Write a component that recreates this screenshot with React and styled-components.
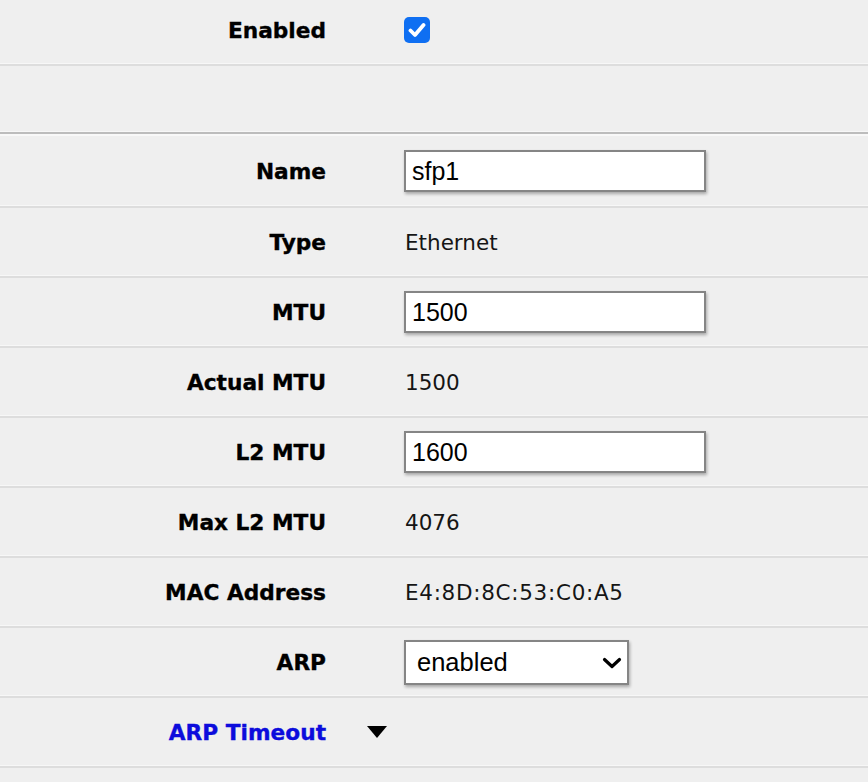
import React, { useState } from 'react';
import styled, { createGlobalStyle } from 'styled-components';

const GlobalStyle = createGlobalStyle`
  html, body {
    margin: 0;
    padding: 0;
    background: #efefef;
  }
  body {
    font-family: "DejaVu Sans", Verdana, sans-serif;
    color: #111;
  }
`;

const Form = styled.div`
  width: 868px;
  min-height: 782px;
  background: #efefef;
`;

const Row = styled.div`
  display: grid;
  grid-template-columns: 326px 78px 1fr;
  align-items: center;
  box-sizing: content-box;
  height: ${(p) => p.$h || 68}px;
  padding-bottom: ${(p) => p.$pb || 0}px;
  border-bottom: 2px solid ${(p) => (p.$strong ? '#bcbcbc' : '#dddddd')};
  box-shadow: inset 0 -3px 0 -2px #f7f7f7;
`;

const TopEdge = styled.div`
  height: 2px;
  background: #f8f8f8;
`;

const Label = styled.div`
  text-align: right;
  font-weight: bold;
  font-size: 21.7px;
  -webkit-text-stroke: 0.35px ${(p) => (p.$link ? '#0c0cdc' : '#000')};
  color: ${(p) => (p.$link ? '#0c0cdc' : '#000')};
  cursor: ${(p) => (p.$link ? 'pointer' : 'default')};
  white-space: nowrap;
`;

const Toggle = styled.div`
  padding-left: 41px;
  display: flex;
  align-items: center;
`;

const Value = styled.div`
  font-size: 21.5px;
  color: #151515;
  padding-left: 1px;
  letter-spacing: ${(p) => (p.$wide ? '0.7px' : '0')};
`;

const TextInput = styled.input`
  width: 302px;
  height: 42px;
  box-sizing: border-box;
  border: 2px solid #858585;
  border-radius: 0;
  background: #fff;
  padding: 0 6px;
  font-family: "Liberation Sans", Arial, sans-serif;
  font-size: 25px;
  color: #000;
  box-shadow: 1px 2px 3px rgba(0, 0, 0, 0.3);
  outline: none;
`;

const SelectWrap = styled.div`
  position: relative;
  width: 225px;
  height: 45px;
`;

const Select = styled.select`
  appearance: none;
  -webkit-appearance: none;
  width: 100%;
  height: 100%;
  box-sizing: border-box;
  border: 2px solid #858585;
  border-radius: 0;
  background: #fff;
  padding: 0 0 0 11px;
  font-family: "Liberation Sans", Arial, sans-serif;
  font-size: 25.5px;
  color: #000;
  box-shadow: 1px 2px 3px rgba(0, 0, 0, 0.3);
  outline: none;
`;

const Chevron = styled.svg`
  position: absolute;
  right: 7px;
  top: 17px;
  pointer-events: none;
`;

const CheckBox = styled.button`
  width: 26px;
  height: 26px;
  border: none;
  border-radius: 5px;
  background: ${(p) => (p.$on ? '#0f6ff2' : '#fff')};
  display: flex;
  align-items: center;
  justify-content: center;
  padding: 0;
  cursor: pointer;
`;

const rows = [
  { label: 'Type', value: 'Ethernet' },
  { label: 'MTU', input: '1500' },
  { label: 'Actual MTU', value: '1500' },
  { label: 'L2 MTU', input: '1600' },
  { label: 'Max L2 MTU', value: '4076' },
  { label: 'MAC Address', value: 'E4:8D:8C:53:C0:A5', wide: true },
];

export default function App() {
  const [enabled, setEnabled] = useState(true);

  return (
    <Form>
      <GlobalStyle />
      <Row $h={60} $pb={4}>
        <Label>Enabled</Label>
        <div />
        <div>
          <CheckBox $on={enabled} onClick={() => setEnabled(!enabled)}>
            {enabled && (
              <svg width="18" height="16" viewBox="0 0 18 16">
                <path d="M2.5 8.5 L7 13 L15.5 3" fill="none" stroke="#fff" strokeWidth="3.8" strokeLinecap="round" strokeLinejoin="round" />
              </svg>
            )}
          </CheckBox>
        </div>
      </Row>
      <Row $h={66} $strong />
      <TopEdge />
      <Row $h={70}>
        <Label>Name</Label>
        <div />
        <div>
          <TextInput defaultValue="sfp1" />
        </div>
      </Row>
      {rows.map((r) => (
        <Row key={r.label}>
          <Label>{r.label}</Label>
          <div />
          <div>
            {r.input ? <TextInput defaultValue={r.input} /> : <Value $wide={r.wide}>{r.value}</Value>}
          </div>
        </Row>
      ))}
      <Row>
        <Label>ARP</Label>
        <div />
        <div>
          <SelectWrap>
            <Select defaultValue="enabled">
              <option value="enabled">enabled</option>
              <option value="disabled">disabled</option>
              <option value="proxy-arp">proxy-arp</option>
              <option value="reply-only">reply-only</option>
            </Select>
            <Chevron width="20" height="12" viewBox="0 0 20 12">
              <path d="M2.5 2.5 L10 9.5 L17.5 2.5" fill="none" stroke="#000" strokeWidth="3.2" strokeLinecap="round" strokeLinejoin="round" />
            </Chevron>
          </SelectWrap>
        </div>
      </Row>
      <Row>
        <Label $link>ARP Timeout</Label>
        <Toggle>
          <svg width="20" height="12" viewBox="0 0 20 12">
            <path d="M0 0 H20 L10 12 Z" fill="#000" />
          </svg>
        </Toggle>
        <div />
      </Row>
    </Form>
  );
}
